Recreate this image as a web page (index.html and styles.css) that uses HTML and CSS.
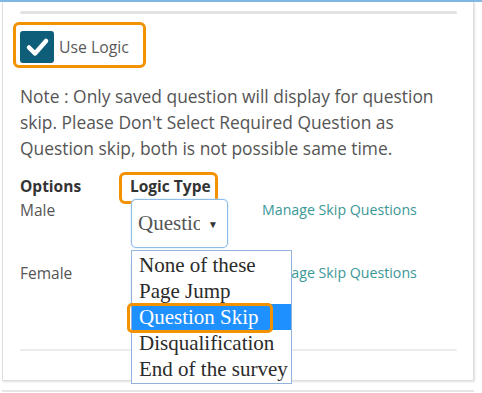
FILE: index.html
```html
<!DOCTYPE html>
<html lang="en">
<head>
  <meta charset="UTF-8">
  <meta name="viewport" content="width=device-width, initial-scale=1.0">
  <title>Question Logic</title>
  <link rel="stylesheet" href="styles.css">
</head>
<body>
  <div class="top-bar"></div>
  <div class="logic-card">
    <div class="rule"></div>

    <label class="use-logic marked">
      <span class="check-box">
        <svg width="34" height="32" viewBox="0 0 34 32">
          <path d="M9 16.5 L15 22.5 L26 10" fill="none" stroke="#fff" stroke-width="4.5" stroke-linecap="round" stroke-linejoin="round"/>
        </svg>
      </span>
      <span class="use-logic-text">Use Logic</span>
    </label>

    <p class="note">Note : Only saved question will display for question skip. Please Don't Select Required Question as Question skip, both is not possible same time.</p>

    <div class="logic-head">
      <span class="col-head">Options</span>
      <span class="col-head"><span class="marked">Logic Type</span></span>
    </div>

    <div class="logic-row">
      <span class="option-name">Male</span>
      <div class="logic-select">
        <div class="select-box">
          <span class="select-value">Question Skip</span>
          <span class="select-arrow">&#9660;</span>
        </div>
        <ul class="select-list">
          <li>None of these</li>
          <li>Page Jump</li>
          <li class="selected">Question Skip</li>
          <li>Disqualification</li>
          <li>End of the survey</li>
        </ul>
      </div>
      <a class="manage-link">Manage Skip Questions</a>
    </div>

    <div class="logic-row second-row">
      <span class="option-name">Female</span>
      <div class="logic-select">
        <div class="select-box">
          <span class="select-value">None of these</span>
          <span class="select-arrow">&#9660;</span>
        </div>
      </div>
      <a class="manage-link">Manage Skip Questions</a>
    </div>

    <div class="rule rule-thin"></div>
  </div>
  <div class="next-card"></div>
</body>
</html>
```

FILE: styles.css
```css
body, html {
  margin: 0;
  font-family: "Open Sans", Arial, sans-serif;
  background: #fff;
}
.top-bar {
  height: 2px;
  background: #82b7e3;
}
.logic-card {
  box-sizing: border-box;
  width: 472px;
  margin-left: 2px;
  padding: 9px 16px 29px 17px;
  border: 1px solid #dedede;
  border-top: none;
  box-shadow: 1px 1px 2px rgba(0, 0, 0, 0.12);
}
.rule {
  height: 3px;
  background: #e3e3e3;
  border-radius: 2px;
}
.rule-thin {
  height: 2px;
  margin-top: 38px;
  background: #ececec;
}

/* orange call-outs */
.marked {
  position: relative;
}
.marked::after {
  content: "";
  position: absolute;
  border: 3px solid #f39200;
  border-radius: 6px;
}

.use-logic {
  display: inline-flex;
  align-items: center;
  gap: 5px;
  margin-top: 17px;
}
.use-logic::after {
  inset: -9px -17px -5px -7px;
}
.check-box {
  display: flex;
  width: 34px;
  height: 32px;
  background: #0e5d79;
  border-radius: 3px;
}
.use-logic-text {
  font-size: 15.8px;
  color: #5a5a5a;
}

.note {
  margin: 15px 0 15px;
  font-size: 17.4px;
  line-height: 26px;
  color: #555;
}

.logic-head, .logic-row {
  display: grid;
  grid-template-columns: 110px 132px auto;
  align-items: start;
}
.col-head {
  font-size: 15.5px;
  line-height: 20px;
  font-weight: bold;
  color: #333;
}
.col-head .marked::after {
  inset: -3px -7px -7px -11px;
}
.logic-row {
  margin-top: 3px;
}
.second-row {
  margin-top: 14px;
}
.option-name {
  padding-top: 1px;
  font-size: 15.5px;
  line-height: 20px;
  color: #555;
}
.manage-link {
  padding-top: 1px;
  font-size: 14.2px;
  line-height: 20px;
  color: #3c9896;
}

.logic-select {
  position: relative;
  margin-left: 1px;
}
.select-box {
  box-sizing: border-box;
  display: flex;
  align-items: center;
  width: 97px;
  height: 49px;
  padding-left: 6px;
  border: 1px solid #8fbbe8;
  border-radius: 5px;
  box-shadow: 0 0 2px #b9d7f6;
  background: #fff;
}
.select-value {
  width: 62px;
  overflow: hidden;
  white-space: nowrap;
  font-family: "Liberation Serif", "Times New Roman", serif;
  font-size: 21px;
  color: #555;
}
.select-arrow {
  margin-left: 8px;
  font-size: 10px;
  color: #333;
}

.select-list {
  position: absolute;
  top: calc(100% + 2px);
  left: 0;
  z-index: 2;
  box-sizing: border-box;
  width: 161px;
  margin: 0;
  padding: 1px 0;
  list-style: none;
  border: 1px solid #94b3dc;
  background: #fff;
}
.select-list li {
  height: 26px;
  padding-left: 7px;
  font-family: "Liberation Serif", "Times New Roman", serif;
  font-size: 21px;
  line-height: 26px;
  color: #2b2b2b;
  white-space: nowrap;
}
.select-list .selected {
  position: relative;
  background: #1e90ff;
  color: #fff;
}
.select-list .selected::after {
  content: "";
  position: absolute;
  top: -1px;
  bottom: -3px;
  left: -5px;
  right: 18px;
  border: 3px solid #f39200;
  border-radius: 5px;
}

.next-card {
  width: 472px;
  margin: 9px 0 0 2px;
  border-top: 2px solid #e6e6e6;
}
```
